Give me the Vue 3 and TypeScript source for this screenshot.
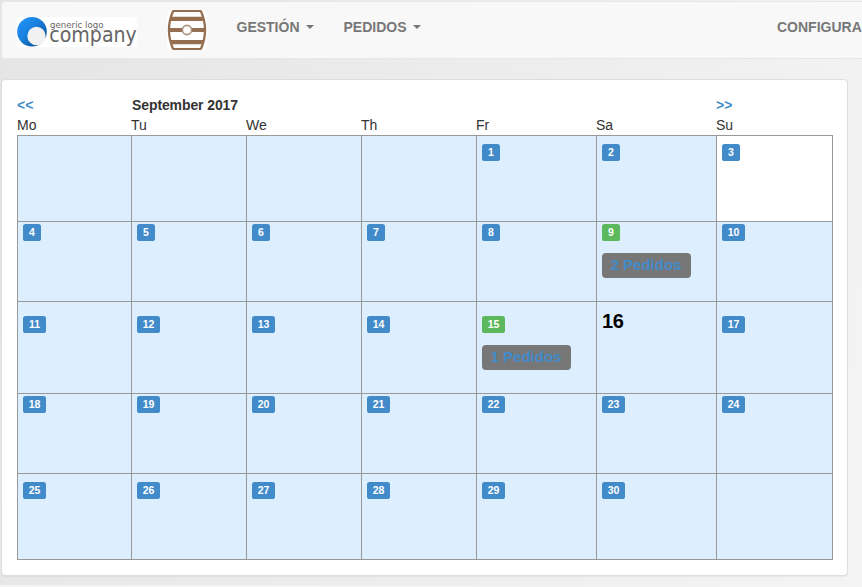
<script setup lang="ts">
interface Day {
  n: number | null
  orders?: number
  today?: boolean
  off?: boolean
}

const menus: string[] = ['GESTIÓN', 'PEDIDOS']
const weekdays: string[] = ['Mo', 'Tu', 'We', 'Th', 'Fr', 'Sa', 'Su']
const orders: Record<number, number> = { 9: 2, 15: 1 }
const firstOffset = 4

const days: Day[] = Array.from({ length: 35 }, (_, i) => {
  const n = i - firstOffset + 1
  if (n < 1 || n > 30) return { n: null }
  return { n, orders: orders[n], today: n === 16, off: n === 3 }
})
const weeks: Day[][] = Array.from({ length: 5 }, (_, w) => days.slice(w * 7, w * 7 + 7))
</script>

<template>
  <div class="page">
    <nav class="navbar">
      <svg class="logo" viewBox="0 0 120 30" width="120" height="30">
        <defs>
          <linearGradient id="ball" x1="0" y1="0" x2="1" y2="1">
            <stop offset="0" stop-color="#2196ff" />
            <stop offset="0.45" stop-color="#1a80dd" />
            <stop offset="1" stop-color="#07407c" />
          </linearGradient>
        </defs>
        <rect width="120" height="30" rx="4" fill="#fff" />
        <circle cx="15" cy="14.8" r="14.8" fill="url(#ball)" />
        <circle cx="19.5" cy="19" r="9.2" fill="#f1f1f1" />
        <text class="logo-small" x="33" y="11" textLength="53.5" lengthAdjust="spacingAndGlyphs">generic logo</text>
        <text class="logo-big" x="32.3" y="24.9" textLength="87.5" lengthAdjust="spacingAndGlyphs">company</text>
      </svg>
      <svg class="barrel" viewBox="0 0 40 40" width="40" height="40">
        <rect width="40" height="40" rx="5" fill="#fff" />
        <g fill="#956f51">
          <path d="M6 0H34V2H6zM3.5 6.7H36.5L37.5 10.9H2.5zM1.5 18H38.5V22H1.5zM2.5 30H37.5L36.5 34.2H3.5zM6 38H34V40H6z" />
        </g>
        <path d="M6.2 .8C.8 13 .8 27 6.2 39.2M33.8 .8C39.2 13 39.2 27 33.8 39.2" fill="none" stroke="#956f51" stroke-width="2.3" />
        <circle cx="20" cy="20" r="4.6" fill="#fff" stroke="#ab917d" stroke-width="1.6" />
      </svg>
      <a v-for="m in menus" :key="m" class="menu">{{ m }}<i class="caret"></i></a>
      <a class="menu config">CONFIGURACIÓN</a>
    </nav>

    <main class="panel">
      <div class="row title">
        <a class="arrow">&lt;&lt;</a>
        <strong class="month">September 2017</strong>
        <a class="arrow">&gt;&gt;</a>
      </div>
      <div class="row names">
        <span v-for="w in weekdays" :key="w">{{ w }}</span>
      </div>
      <div class="calendar">
        <div v-for="(week, i) in weeks" :key="i" class="row week" :class="'week-' + (i + 1)">
          <div v-for="(d, j) in week" :key="j" class="cell" :class="{ off: d.off }">
            <b v-if="d.today" class="today">{{ d.n }}</b>
            <span v-else-if="d.n" class="tag" :class="{ busy: d.orders, wide: d.n > 9 }">{{ d.n }}</span>
            <a v-if="d.orders" class="orders">{{ d.orders }} Pedidos</a>
          </div>
        </div>
      </div>
    </main>
    <div class="foot"></div>
  </div>
</template>

<style>
body {
  margin: 0;
  overflow: hidden;
}
</style>

<style scoped>
.page {
  box-sizing: border-box;
  width: 862px;
  height: 587px;
  overflow: hidden;
  display: flex;
  flex-direction: column;
  padding: 1px 0 0 1px;
  background: linear-gradient(105deg, #e5e5e5, #f4f4f4);
  font: 14px/20px "Liberation Sans", Arial, sans-serif;
  color: #333;
}
.navbar {
  box-sizing: border-box;
  flex: none;
  width: 900px;
  height: 58px;
  display: flex;
  align-items: flex-start;
  background: #f8f8f8;
  border: 1px solid #e7e7e7;
  border-radius: 4px;
}
.logo {
  margin: 15px 0 0 15px;
  flex: none;
}
.logo-small,
.logo-big {
  font-family: "DejaVu Sans", sans-serif;
  fill: #666;
}
.logo-small {
  font-size: 9px;
}
.logo-big {
  font-size: 20.5px;
}
.barrel {
  margin: 8px 0 0 30px;
  flex: none;
}
.menu {
  display: flex;
  align-items: center;
  margin: 15px 0 0 30px;
  font-weight: bold;
  color: #777;
  white-space: nowrap;
}
.barrel + .menu {
  margin-left: 29.5px;
}
.caret {
  margin-left: 6px;
  border: 4px solid transparent;
  border-top-color: #777;
  border-bottom: 0;
}
.menu.config {
  margin-left: auto;
  width: 123px;
}
.panel {
  box-sizing: border-box;
  flex: none;
  width: 847px;
  height: 497px;
  margin-top: 20px;
  padding: 15px;
  background: #fff;
  border: 1px solid #ddd;
  border-radius: 4px;
  box-shadow: 0 1px 1px rgba(0, 0, 0, 0.05);
}
.row {
  display: grid;
  grid-template-columns: 114px 115px 115px 115px 120px 120px 117px;
}
.names {
  height: 20px;
}
.month {
  grid-column: 2 / 7;
  padding-left: 1px;
  letter-spacing: -0.1px;
}
.arrow {
  color: #428bca;
  font-weight: bold;
}
.calendar {
  box-sizing: border-box;
  width: 816px;
  border-bottom: 1px solid #999;
}
.week {
  height: 80px;
}
.week-1,
.week-5 {
  height: 86px;
}
.week-3 {
  height: 92px;
}
.cell {
  display: flex;
  flex-direction: column;
  align-items: flex-start;
  padding: 2px 0 0 5px;
  background: #def;
  border: 1px solid #999;
  border-width: 1px 0 0 1px;
}
.cell:last-child {
  border-right-width: 1px;
}
.week-1 .cell,
.week-5 .cell {
  padding-top: 8px;
}
.week-3 .cell {
  padding-top: 14px;
}
.cell.off {
  background: #fff;
}
.tag {
  box-sizing: border-box;
  width: 18px;
  height: 17px;
  border-radius: 2.6px;
  background: #428bca;
  color: #fff;
  font-size: 10.5px;
  font-weight: bold;
  line-height: 17px;
  text-align: center;
}
.tag.wide {
  width: 23px;
}
.tag.busy {
  background: #5cb85c;
}
.orders {
  box-sizing: border-box;
  width: 89px;
  height: 25px;
  margin-top: 12px;
  padding-right: 1px;
  border-radius: 4px;
  background: #777;
  color: #428bca;
  font-size: 15px;
  font-weight: bold;
  line-height: 24px;
  text-align: center;
}
.today {
  margin-top: -6px;
  font-size: 20px;
  line-height: 22px;
  letter-spacing: -0.4px;
  color: #000;
}
.foot {
  margin: 9px 0 0 -1px;
  flex: 1;
  background: #f3f3f3;
}
</style>
